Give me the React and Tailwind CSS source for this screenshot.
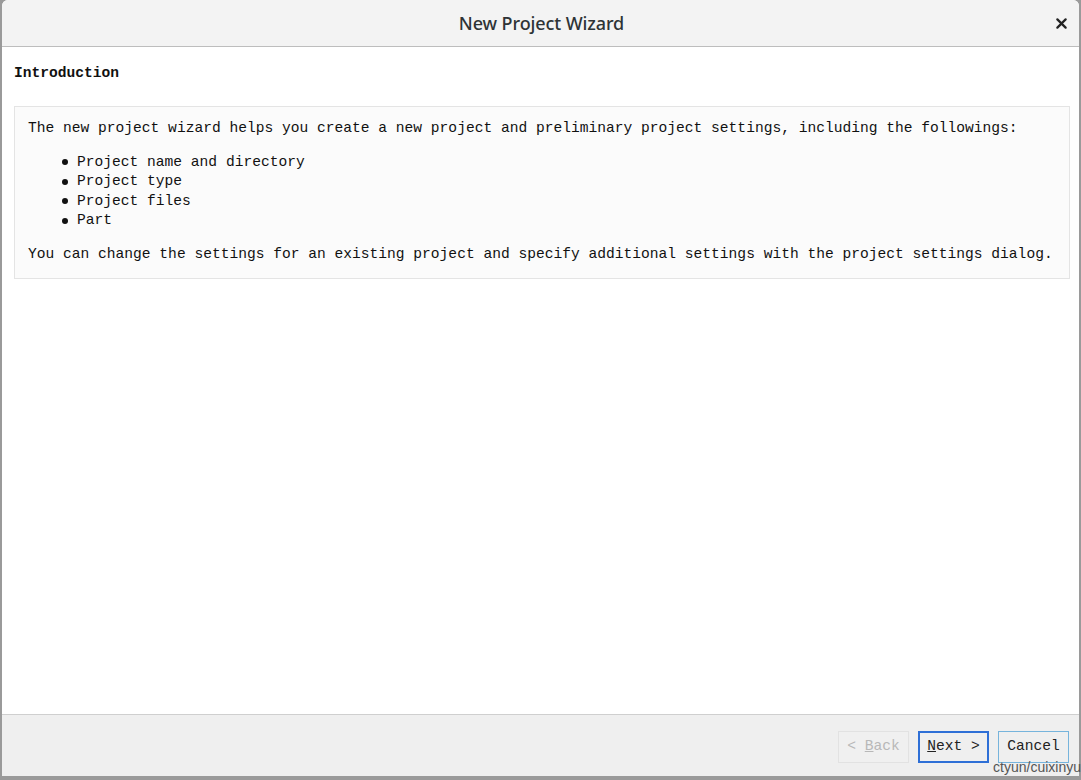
const mono = { fontFamily: '"Liberation Mono", "Courier New", monospace' }

const parts = ["Project name and directory", "Project type", "Project files", "Part"]

function Button({ children, variant }) {
  const styles = {
    disabled: "border border-[#e2e2e2] text-[#b8b8b8] bg-[#f0f0f0]",
    primary: "border-2 border-[#2e6fd6] text-[#222]",
    normal: "border border-[#76b4dc] text-[#222]",
  }
  return (
    <div className={`w-[71px] h-[32px] flex items-center justify-center text-[14.6px] ${styles[variant]}`} style={mono}>
      {children}
    </div>
  )
}

export default function App() {
  return (
    <div className="w-[1081px] h-[780px] bg-[#9a9a9a] overflow-hidden relative">
      <div className="ml-[2px] w-[1077px] h-[776px] bg-white flex flex-col rounded-t-[6px] overflow-hidden">
        {/* Title bar */}
        <div className="h-[47px] shrink-0 bg-[#f3f3f3] border-b border-[#bdbdbd] flex items-center justify-center relative">
          <span className="text-[18px] font-medium text-[#2e3436] tracking-[-0.1px] pl-[2px] pt-[1px]" style={{ fontFamily: '"Noto Sans", "Open Sans", sans-serif' }}>
            New Project Wizard
          </span>
          <span className="absolute right-[12px] top-[18px]">
            <svg width="11" height="11" viewBox="0 0 12 12">
              <path d="M1.5 1.5 L10.5 10.5 M10.5 1.5 L1.5 10.5" stroke="#222" strokeWidth="2.4" strokeLinecap="round" />
            </svg>
          </span>
        </div>

        {/* Body */}
        <div className="flex-1 pl-[12px] pr-[9px] pt-[17px]" style={mono}>
          <div className="text-[14.6px] font-bold text-[#111] leading-[18px]">Introduction</div>
          <div className="mt-[24px] border border-[#e4e4e4] bg-[#fbfbfb] pl-[13px] pt-[12px] pb-[14px] text-[14.6px] text-[#111] leading-[19.5px]">
            <p>The new project wizard helps you create a new project and preliminary project settings, including the followings:</p>
            <ul className="mt-[14px] pl-[49px]">
              {parts.map((p) => (
                <li key={p} className="flex items-center">
                  <span className="w-[6px] h-[6px] rounded-full bg-[#111] mr-[9px] -ml-[15px]" />
                  {p}
                </li>
              ))}
            </ul>
            <p className="mt-[14px]">You can change the settings for an existing project and specify additional settings with the project settings dialog.</p>
          </div>
        </div>

        {/* Footer */}
        <div className="h-[62px] shrink-0 bg-[#efefef] border-t border-[#cfcfcf] flex items-center justify-end gap-[9px] pr-[10px] pt-[3px]">
          <Button variant="disabled">
            <span>&lt; <span className="underline">B</span>ack</span>
          </Button>
          <Button variant="primary">
            <span><span className="underline">N</span>ext &gt;</span>
          </Button>
          <Button variant="normal">Cancel</Button>
        </div>
      </div>
      <span className="absolute right-0 bottom-[5px] text-[14px] leading-[15px] text-[#555]" style={{ fontFamily: '"Liberation Sans", sans-serif' }}>
        ctyun/cuixinyu
      </span>
    </div>
  )
}
